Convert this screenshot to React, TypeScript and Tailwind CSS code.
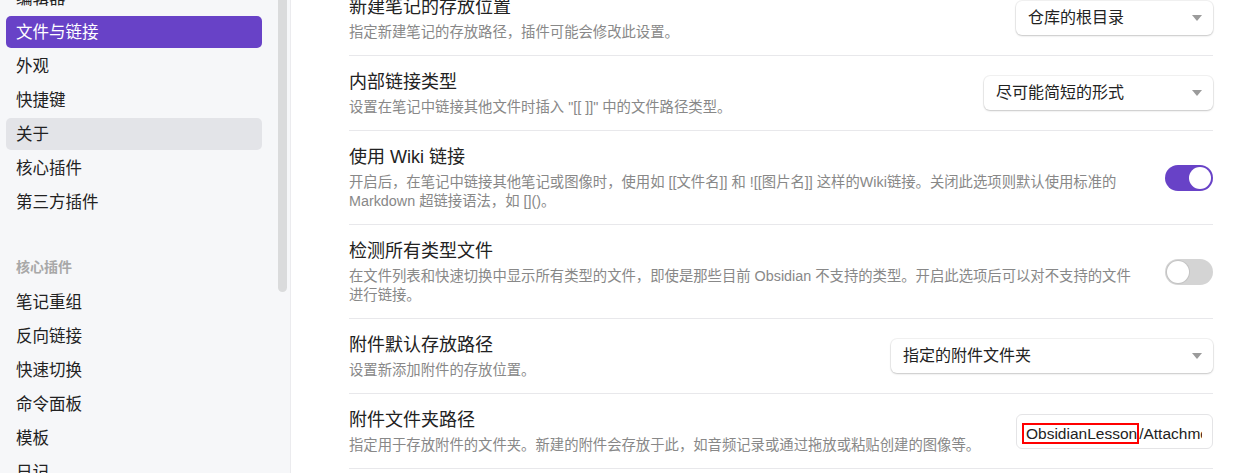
import React from "react";

const navTop = ["编辑器", "文件与链接", "外观", "快捷键", "关于", "核心插件", "第三方插件"];
const navCore = ["笔记重组", "反向链接", "快速切换", "命令面板", "模板", "日记"];

function NavItem({ label, active, hover }: { label: string; active?: boolean; hover?: boolean }) {
  const cls = active
    ? "bg-[#6842c7] text-white"
    : hover
    ? "bg-[#e3e4e8] text-[#222222]"
    : "text-[#222222]";
  return (
    <div className={`h-[32px] mb-[2px] rounded-[5px] pl-[10px] flex items-center text-[16.5px] leading-[32px] whitespace-nowrap ${cls}`}>
      {label}
    </div>
  );
}

function Dropdown({ label, width }: { label: string; width: string }) {
  return (
    <div className={`${width} h-[34px] bg-white rounded-[6px] shadow-[0_1px_2px_rgba(0,0,0,0.18),0_0_0_1px_rgba(0,0,0,0.05)] flex items-center justify-between pl-[12px] pr-[11px] shrink-0`}>
      <span className="text-[16px] text-[#222222] leading-[20px] whitespace-nowrap">{label}</span>
      <svg width="10" height="6" viewBox="0 0 10 6" className="shrink-0">
        <path d="M0 0 L10 0 L5 6 Z" fill="#9b9b9b" />
      </svg>
    </div>
  );
}

function Toggle({ on }: { on: boolean }) {
  return on ? (
    <div className="w-[48px] h-[26px] rounded-full bg-[#6842c7] flex items-center justify-end pr-[2px] shrink-0">
      <div className="w-[22px] h-[22px] rounded-full bg-white" />
    </div>
  ) : (
    <div className="w-[48px] h-[26px] rounded-full bg-[#d4d4d4] flex items-center justify-start pl-[2px] shrink-0">
      <div className="w-[22px] h-[22px] rounded-full bg-white shadow-[0_0_0_1px_rgba(0,0,0,0.08)]" />
    </div>
  );
}

function Row({ title, desc, control }: { title: string; desc: React.ReactNode; control: React.ReactNode }) {
  return (
    <div className="flex items-center justify-between border-b border-[#e8e8eb] py-[13px]">
      <div className="flex flex-col min-w-0">
        <div className="text-[18px] leading-[26px] text-[#222222] whitespace-nowrap">{title}</div>
        <div className="mt-[3px] text-[14.35px] leading-[19px] text-[#888888] whitespace-nowrap">{desc}</div>
      </div>
      {control}
    </div>
  );
}

export default function App() {
  return (
    <div className="flex w-[1236px] h-[473px] overflow-hidden bg-white font-['Liberation_Sans','Noto_Sans_CJK_SC',sans-serif]">
      <aside className="w-[291px] shrink-0 flex bg-[#f6f7f9] border-r border-[#ebebee] overflow-hidden">
        <nav className="w-[278px] shrink-0 pl-[6px] pr-[16px] mt-[-18px]">
          {navTop.map((l, i) => (
            <NavItem key={l + i} label={l} active={i === 1} hover={i === 4} />
          ))}
          <div className="mt-[39px] mb-[9px] pl-[10px] h-[20px] leading-[20px] text-[14px] font-bold text-[#a8a8a8]">
            核心插件
          </div>
          {navCore.map((l) => (
            <NavItem key={l} label={l} />
          ))}
        </nav>
        <div className="w-[9px] shrink-0">
          <div className="w-[9px] h-[292px] bg-[#dadbdc] rounded-b-[5px]" />
        </div>
      </aside>
      <main className="flex-1 pl-[58px] pr-[23px] overflow-hidden">
        <div className="mt-[-19px]">
          <Row
            title="新建笔记的存放位置"
            desc="指定新建笔记的存放路径，插件可能会修改此设置。"
            control={<Dropdown label="仓库的根目录" width="w-[197px]" />}
          />
          <Row
            title="内部链接类型"
            desc={'设置在笔记中链接其他文件时插入 "[[ ]]" 中的文件路径类型。'}
            control={<Dropdown label="尽可能简短的形式" width="w-[229px]" />}
          />
          <Row
            title="使用 Wiki 链接"
            desc={
              <>
                开启后，在笔记中链接其他笔记或图像时，使用如 [[文件名]] 和 ![[图片名]] 这样的Wiki链接。关闭此选项则默认使用标准的
                <br />
                Markdown 超链接语法，如 []()。
              </>
            }
            control={<Toggle on />}
          />
          <Row
            title="检测所有类型文件"
            desc={
              <>
                在文件列表和快速切换中显示所有类型的文件，即使是那些目前 Obsidian 不支持的类型。开启此选项后可以对不支持的文件
                <br />
                进行链接。
              </>
            }
            control={<Toggle on={false} />}
          />
          <Row
            title="附件默认存放路径"
            desc="设置新添加附件的存放位置。"
            control={<Dropdown label="指定的附件文件夹" width="w-[322px]" />}
          />
          <Row
            title="附件文件夹路径"
            desc="指定用于存放附件的文件夹。新建的附件会存放于此，如音频记录或通过拖放或粘贴创建的图像等。"
            control={
              <div className="w-[197px] h-[35px] shrink-0 bg-white border border-[#e4e4e6] rounded-[6px] pl-[5px] pr-[10px] flex items-center overflow-hidden">
                <div className="overflow-hidden whitespace-nowrap text-[15.5px] text-[#222222] leading-[20px] pt-[4px]">
                  <span className="inline-block border-2 border-[#ff0000] pl-[2px] pr-0 leading-[17px]">ObsidianLesson</span>
                  /Attachments
                </div>
              </div>
            }
          />
        </div>
      </main>
    </div>
  );
}
